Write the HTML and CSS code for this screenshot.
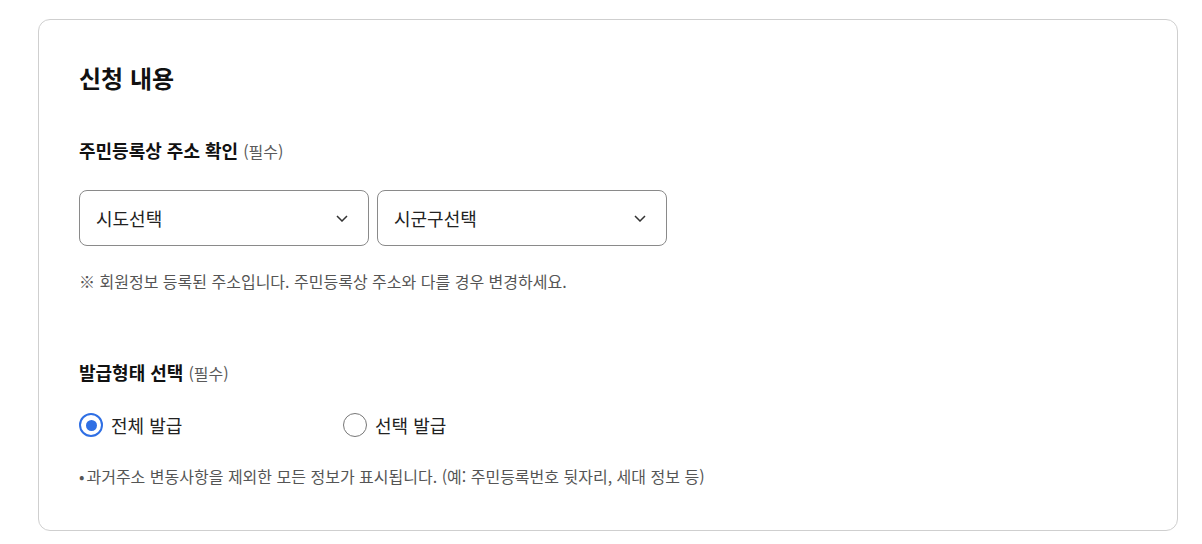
FILE: index.html
```html
<!DOCTYPE html>
<html lang="ko">
<head>
<meta charset="utf-8">
<title>신청 내용</title>
<link rel="stylesheet" href="styles.css">
</head>
<body>
<section class="card">
  <h2 class="card-title">신청 내용</h2>

  <div class="field">
    <h3 class="field-label">주민등록상 주소 확인 <span class="req">(필수)</span></h3>
    <div class="selects">
      <div class="select">
        <span class="select-text">시도선택</span>
        <svg class="chevron" width="12" height="7" viewBox="0 0 12 7"><path d="M1 1l5 5 5-5" fill="none" stroke="#333" stroke-width="1.5"/></svg>
      </div>
      <div class="select">
        <span class="select-text">시군구선택</span>
        <svg class="chevron" width="12" height="7" viewBox="0 0 12 7"><path d="M1 1l5 5 5-5" fill="none" stroke="#333" stroke-width="1.5"/></svg>
      </div>
    </div>
    <p class="note">※ 회원정보 등록된 주소입니다. 주민등록상 주소와 다를 경우 변경하세요.</p>
  </div>

  <div class="field field-2">
    <h3 class="field-label">발급형태 선택 <span class="req">(필수)</span></h3>
    <div class="radios">
      <label class="radio">
        <span class="radio-circle checked"></span>
        <span class="radio-text">전체 발급</span>
      </label>
      <label class="radio">
        <span class="radio-circle"></span>
        <span class="radio-text">선택 발급</span>
      </label>
    </div>
    <p class="note bullet"><span class="dot">•</span>과거주소 변동사항을 제외한 모든 정보가 표시됩니다. (예: 주민등록번호 뒷자리, 세대 정보 등)</p>
  </div>
</section>
</body>
</html>
```

FILE: styles.css
```css
html, body {
  margin: 0;
  padding: 0;
  background: #fff;
}
body {
  padding: 19px 24px 0 38px;
  font-family: "Noto Sans CJK KR", "Noto Sans", sans-serif;
  color: #1a1a1a;
}
.card {
  border: 1px solid #cfcfcf;
  border-radius: 12px;
  padding: 42px 40px 41px 40px;
  box-sizing: border-box;
  height: 512px;
}
.card-title {
  margin: 0;
  font-size: 24px;
  line-height: 32px;
  font-weight: 700;
  color: #111;
}
.field {
  margin-top: 44px;
}
.field-2 {
  margin-top: 68px;
}
.field-label {
  margin: 0;
  font-size: 18px;
  line-height: 24px;
  font-weight: 700;
  color: #111;
}
.req {
  font-size: 16px;
  font-weight: 400;
  color: #5a5a5a;
}
.selects {
  display: flex;
  gap: 8px;
  margin-top: 27px;
}
.select {
  width: 290px;
  height: 56px;
  box-sizing: border-box;
  border: 1px solid #8a8a8a;
  border-radius: 8px;
  padding: 0 20px 0 16px;
  display: flex;
  align-items: center;
  justify-content: space-between;
}
.select-text {
  font-size: 18px;
  color: #222;
}
.chevron {
  display: block;
}
.note {
  margin: 24px 0 0;
  font-size: 16px;
  line-height: 22px;
  color: #555;
}
.radios {
  display: flex;
  margin-top: 28px;
}
.radio {
  width: 264px;
  display: flex;
  align-items: center;
  gap: 8px;
  height: 24px;
}
.radio-circle {
  width: 24px;
  height: 24px;
  box-sizing: border-box;
  border-radius: 50%;
  border: 1.5px solid #777;
  display: flex;
  align-items: center;
  justify-content: center;
}
.radio-circle.checked {
  border: 2px solid #2f6fe4;
}
.radio-circle.checked::after {
  content: "";
  width: 11px;
  height: 11px;
  border-radius: 50%;
  background: #2f6fe4;
}
.radio-text {
  font-size: 18px;
  color: #222;
}
.note.bullet {
  margin-top: 28px;
}
.dot {
  margin-right: 2px;
}
```
